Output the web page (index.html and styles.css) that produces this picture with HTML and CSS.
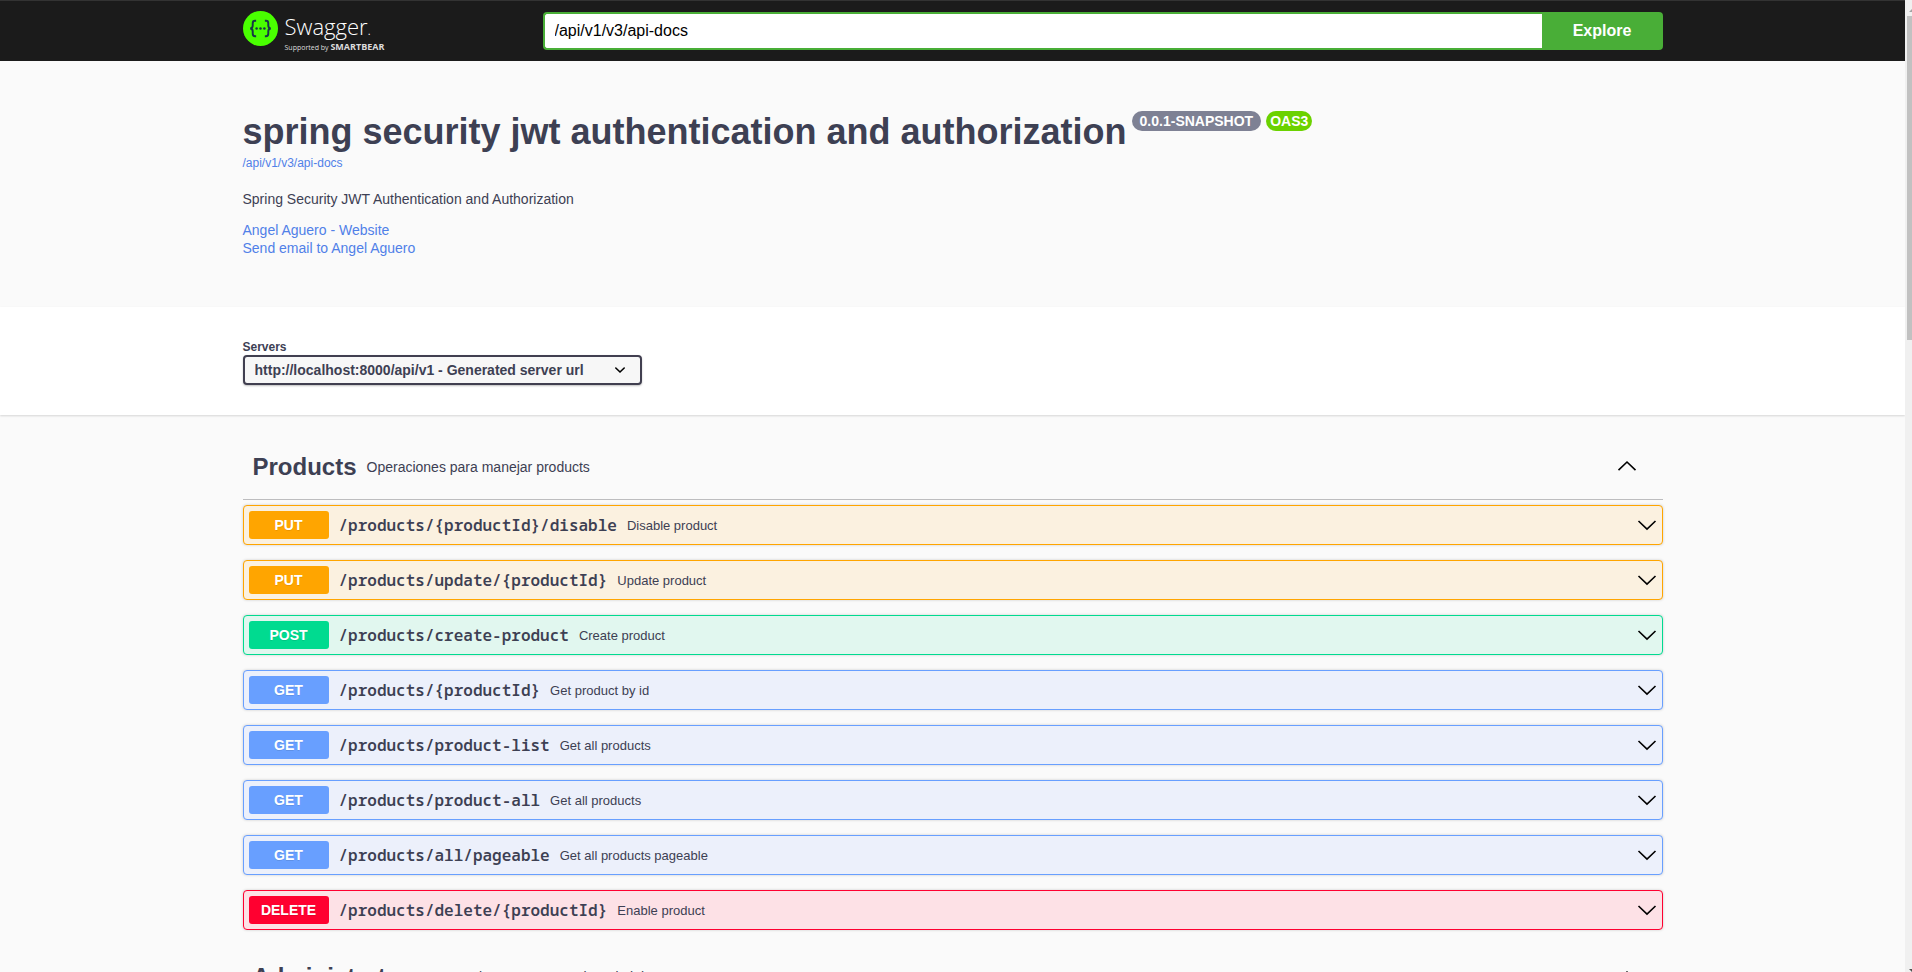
FILE: index.html
```html
<!DOCTYPE html>
<html lang="en">
<head>
<meta charset="utf-8">
<title>Swagger UI</title>
<link rel="stylesheet" href="styles.css">
</head>
<body>
<svg class="sprites" aria-hidden="true">
  <symbol id="chevron-down" viewBox="0 0 20 20"><path d="M1.500 6 10 14.200 18.500 6" fill="none" stroke="currentColor" stroke-width="1.600"/></symbol>
  <symbol id="chevron-up" viewBox="0 0 20 20"><path d="M1.500 13.200 10 5l8.500 8.200" fill="none" stroke="currentColor" stroke-width="1.600"/></symbol>
</svg>
<div class="page">
  <header class="topbar">
    <div class="wrapper topbar-row">
      <a class="logo" href="#">
        <svg class="logo-mark" viewBox="0 0 36 36" aria-hidden="true">
          <circle cx="18" cy="18" r="18" fill="#49ff00"/>
          <g fill="none" stroke="#173647" stroke-width="2">
            <path d="M13.500 10h-1.200q-2.300 0-2.300 2.500v2.500q0 2.800-2.600 3 2.600.2 2.600 3v2.500q0 2.500 2.300 2.500h1.200"/>
            <path d="M22.500 10h1.200q2.300 0 2.300 2.500v2.500q0 2.800 2.600 3-2.600.2-2.600 3v2.500q0 2.500-2.300 2.500h-1.200"/>
          </g>
          <g fill="#173647"><circle cx="14" cy="18" r="1.300"/><circle cx="18" cy="18" r="1.300"/><circle cx="22" cy="18" r="1.300"/></g>
        </svg>
        <span class="logo-text">
          <span class="logo-name">Swagger<span class="logo-dot">.</span></span>
          <span class="logo-by">Supported by <b>SMARTBEAR</b></span>
        </span>
      </a>
      <form class="explore">
        <input class="explore-input" type="text" value="/api/v1/v3/api-docs" aria-label="API definition URL">
        <button class="explore-button" type="button">Explore</button>
      </form>
    </div>
  </header>
  <main>
    <section class="wrapper info">
      <div class="info-heading">
        <h1 class="info-title">spring security jwt authentication and authorization</h1>
        <span class="badge">0.0.1-SNAPSHOT</span>
        <span class="badge badge-oas">OAS3</span>
      </div>
      <a class="info-url" href="#">/api/v1/v3/api-docs</a>
      <p class="info-text">Spring Security JWT Authentication and Authorization</p>
      <div class="contact">
        <a href="#">Angel Aguero - Website</a>
        <a href="#">Send email to Angel Aguero</a>
      </div>
    </section>
    <section class="schemes">
      <div class="wrapper schemes-row">
        <label class="schemes-label" for="servers">Servers</label>
        <div class="select">
          <select id="servers" class="select-box"><option>http://localhost:8000/api/v1 - Generated server url</option></select>
          <svg class="select-arrow" viewBox="0 0 12 12" aria-hidden="true"><path d="M1.800 4 6 8l4.200-4" fill="none" stroke="#000" stroke-width="1.600" stroke-linecap="round"/></svg>
        </div>
      </div>
    </section>
    <div class="wrapper tags">
      <section class="tag">
        <div class="tag-header">
          <h2 class="tag-name">Products</h2>
          <p class="tag-text">Operaciones para manejar products</p>
          <button class="tag-toggle" type="button" aria-label="Collapse Products"><svg class="chevron"><use href="#chevron-up"/></svg></button>
        </div>
        <div class="operations">
          <button class="op op-put" type="button"><span class="method">PUT</span><span class="path">/products/{productId}/disable</span><span class="summary">Disable product</span><svg class="chevron"><use href="#chevron-down"/></svg></button>
          <button class="op op-put" type="button"><span class="method">PUT</span><span class="path">/products/update/{productId}</span><span class="summary">Update product</span><svg class="chevron"><use href="#chevron-down"/></svg></button>
          <button class="op op-post" type="button"><span class="method">POST</span><span class="path">/products/create-product</span><span class="summary">Create product</span><svg class="chevron"><use href="#chevron-down"/></svg></button>
          <button class="op op-get" type="button"><span class="method">GET</span><span class="path">/products/{productId}</span><span class="summary">Get product by id</span><svg class="chevron"><use href="#chevron-down"/></svg></button>
          <button class="op op-get" type="button"><span class="method">GET</span><span class="path">/products/product-list</span><span class="summary">Get all products</span><svg class="chevron"><use href="#chevron-down"/></svg></button>
          <button class="op op-get" type="button"><span class="method">GET</span><span class="path">/products/product-all</span><span class="summary">Get all products</span><svg class="chevron"><use href="#chevron-down"/></svg></button>
          <button class="op op-get" type="button"><span class="method">GET</span><span class="path">/products/all/pageable</span><span class="summary">Get all products pageable</span><svg class="chevron"><use href="#chevron-down"/></svg></button>
          <button class="op op-delete" type="button"><span class="method">DELETE</span><span class="path">/products/delete/{productId}</span><span class="summary">Enable product</span><svg class="chevron"><use href="#chevron-down"/></svg></button>
        </div>
      </section>
      <section class="tag">
        <div class="tag-header">
          <h2 class="tag-name">Administrators</h2>
          <p class="tag-text">Operaciones para manejar administrators</p>
          <button class="tag-toggle" type="button" aria-label="Collapse Administrators"><svg class="chevron"><use href="#chevron-up"/></svg></button>
        </div>
      </section>
    </div>
  </main>
</div>
<div class="scrollbar" aria-hidden="true">
  <svg class="scroll-arrow" viewBox="0 0 5 15"><path d="M2 11 5 8v3z" fill="#a3a3a3"/></svg>
  <div class="scroll-thumb"></div>
  <svg class="scroll-arrow scroll-arrow-end" viewBox="0 0 5 15"><path d="M2 12h3v3z" fill="#505050"/></svg>
</div>
</body>
</html>
```
FILE: styles.css
```css
* {
  box-sizing: border-box;
}

body {
  display: grid;
  grid-template-columns: minmax(0, 1fr) 7px;
  height: 100vh;
  margin: 0;
  overflow: hidden;
  background: #fafafa;
  color: #3d4053;
  font-family: "Liberation Sans", Arial, sans-serif;
  font-size: 14px;
}

h1,
h2,
p {
  margin: 0;
}

a {
  text-decoration: none;
}

button,
input,
select {
  margin: 0;
  font-family: inherit;
}

.sprites {
  display: none;
}

.page {
  height: 100vh;
  overflow: hidden;
}

.wrapper {
  width: 100%;
  max-width: 1460px;
  margin: 0 auto;
  padding: 0 20px;
}

.topbar {
  padding: 10px 0;
  border-top: 1px solid #333;
  background: #1b1b1b;
}

.topbar-row {
  display: flex;
  align-items: center;
}

.logo {
  display: flex;
  flex: 1;
  gap: 7px;
  height: 40px;
  color: #fff;
  font-family: "Open Sans", sans-serif;
}

.logo-mark {
  flex: none;
  width: 35px;
  height: 35px;
}

.logo-text {
  display: flex;
  flex-direction: column;
  white-space: nowrap;
}

.logo-name {
  font-size: 22px;
  font-weight: 300;
  line-height: 30px;
}

.logo-dot {
  font-size: 14px;
}

.logo-by {
  margin-top: -3px;
  color: #ddd;
  font-size: 7px;
  line-height: 9px;
}

.logo-by b {
  font-size: 9px;
}

.explore {
  display: flex;
  width: 1120px;
}

.explore-input {
  flex: 1;
  min-width: 0;
  height: 38px;
  padding: 0 10px;
  border: 2px solid #49ae37;
  border-right: 0;
  border-radius: 4px 0 0 4px;
  outline: none;
  background: #fff;
  color: #000;
  font-size: 16px;
}

.explore-button {
  width: 121px;
  height: 38px;
  border: 0;
  border-radius: 0 4px 4px 0;
  background: #49ae37;
  color: #fff;
  font-size: 16px;
  font-weight: 700;
}

.info {
  display: flex;
  flex-direction: column;
  align-items: flex-start;
  padding-top: 50px;
  padding-bottom: 50px;
}

.info a {
  color: #5080e8;
}

.info-heading {
  display: flex;
  align-items: flex-start;
  gap: 5px;
}

.info-title {
  font-size: 36px;
  line-height: 41px;
}

.badge {
  padding: 2px 8px;
  border-radius: 20px;
  background: #7e8194;
  color: #fff;
  font-weight: 700;
  line-height: 16px;
}

.badge-oas {
  padding: 2px 4px;
  background: #6bd200;
}

.info-url {
  padding: 4px 0 21px;
  font-size: 12px;
  line-height: 14px;
}

.info-text {
  line-height: 16px;
}

.contact {
  display: flex;
  flex-direction: column;
  padding-top: 14px;
  line-height: 18px;
}

.schemes {
  padding: 30px 0;
  background: #fff;
  box-shadow: 0 1px 2px rgba(0, 0, 0, 0.15);
}

.schemes-row {
  display: flex;
  flex-direction: column;
}

.schemes-label {
  padding-top: 3px;
  font-size: 12px;
  font-weight: 700;
  line-height: 15px;
}

.select {
  position: relative;
  width: 399px;
  max-width: 100%;
}

.select-box {
  width: 100%;
  height: 30px;
  padding: 0 40px 0 10px;
  border: 2px solid #413f50;
  border-radius: 4px;
  appearance: none;
  background: #f7f7f7;
  box-shadow: 0 1px 2px rgba(0, 0, 0, 0.25);
  color: #3d4053;
  font-size: 14px;
  font-weight: 700;
}

.select-arrow {
  position: absolute;
  top: 9px;
  right: 16px;
  width: 12px;
  height: 12px;
  pointer-events: none;
}

.tags {
  padding-top: 20px;
}

.tag {
  padding-bottom: 15px;
}

.tag-header {
  display: flex;
  align-items: center;
  gap: 10px;
  height: 65px;
  padding: 0 20px 0 10px;
  border-bottom: 1px solid #bdbdbf;
}

.tag-name {
  font-size: 24px;
}

.tag-text {
  flex: 1;
}

.tag-toggle {
  display: flex;
  padding: 0 6px;
  border: 0;
  background: none;
  color: #000;
}

.chevron {
  flex: none;
  width: 20px;
  height: 20px;
}

.operations {
  display: flex;
  flex-direction: column;
  gap: 15px;
  padding-top: 5px;
}

.op {
  display: flex;
  align-items: center;
  gap: 10px;
  height: 40px;
  padding: 5px;
  border: 1px solid;
  border-radius: 4px;
  box-shadow: 0 0 3px rgba(0, 0, 0, 0.19);
  color: #3d4053;
  text-align: left;
}

.op .chevron {
  color: #000;
}

.method {
  width: 80px;
  border-radius: 3px;
  color: #fff;
  font-size: 14px;
  font-weight: 700;
  line-height: 28px;
  text-align: center;
  text-shadow: 0 1px 0 rgba(0, 0, 0, 0.1);
}

.path {
  font-family: "Noto Sans Mono", "Liberation Mono", monospace;
  font-size: 16px;
  font-weight: 600;
}

.summary {
  flex: 1;
  font-size: 13px;
}

.op-put {
  border-color: #ffa500;
  background: #fbf1e0;
}

.op-put .method {
  background: #ffa500;
}

.op-post {
  border-color: #00db90;
  background: #e1f7ef;
}

.op-post .method {
  background: #00db90;
}

.op-get {
  border-color: #689fff;
  background: #ecf0fb;
}

.op-get .method {
  background: #689fff;
}

.op-delete {
  border-color: #ff0030;
  background: #fde1e6;
}

.op-delete .method {
  background: #ff0030;
}

.scrollbar {
  display: flex;
  flex-direction: column;
  height: 100vh;
  padding: 1px 0 0 2px;
  background: #f0f0f0;
}

.scroll-arrow {
  flex: none;
  width: 5px;
  height: 15px;
}

.scroll-arrow-end {
  margin-top: auto;
}

.scroll-thumb {
  height: 33.400%;
  background: #c1c1c1;
}
```
